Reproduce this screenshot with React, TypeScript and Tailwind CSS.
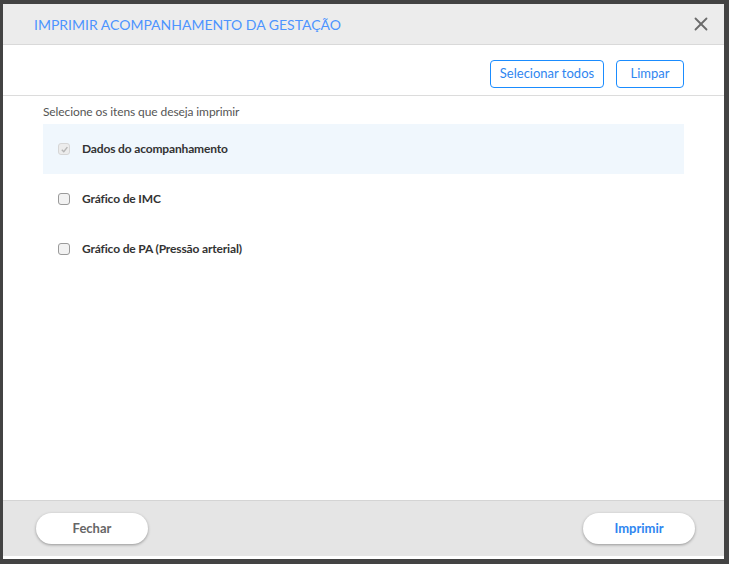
import { X } from 'lucide-react';

const items = [
  { label: 'Dados do acompanhamento', checked: true, disabled: true },
  { label: 'Gráfico de IMC', checked: false, disabled: false },
  { label: 'Gráfico de PA (Pressão arterial)', checked: false, disabled: false },
];

export default function App() {
  return (
    <div className="w-[729px] h-[564px] bg-[#434343] pt-[4px] pl-[3px] font-['Lato','Open_Sans',sans-serif]">
      <div className="w-[721px] h-[555px] bg-white flex flex-col border-b-[3px] border-white">
        {/* header */}
        <div className="h-[41px] bg-[#ececec] border-b border-[#d9d9d9] flex items-center justify-between pl-[31px] pr-[12px]">
          <h1 className="text-[14px] text-[#4d94ff] uppercase">Imprimir acompanhamento da gestação</h1>
          <X size={22} strokeWidth={2} className="text-[#6b6b6b]" />
        </div>

        <div className="h-[51px] border-b border-[#dcdcdc] flex items-start justify-end gap-[12px] pt-[15px] pr-[40px]">
          <button className="h-[28px] w-[114px] rounded-[4px] border border-[#1a8cff] text-[13px] text-[#2f86f0] bg-white">
            Selecionar todos
          </button>
          <button className="h-[28px] w-[68px] rounded-[4px] border border-[#1a8cff] text-[13px] text-[#2f86f0] bg-white">
            Limpar
          </button>
        </div>

        <div className="flex-1 px-[40px] pt-[7px]">
          <p className="text-[12px] text-[#555] mb-[3px] tracking-[-0.1px]">Selecione os itens que deseja imprimir</p>
          <div className="flex flex-col">
            {items.map((item, idx) => (
              <label
                key={idx}
                className={`h-[50px] flex items-center gap-[12px] pl-[15px] ${item.checked ? 'bg-[#f0f7fd]' : ''}`}
              >
                <span
                  className={`w-[12px] h-[12px] rounded-[3px] border flex items-center justify-center ${
                    item.disabled ? 'border-[#d6d6d6] bg-[#ececec]' : 'border-[#9a9a9a] bg-[#f2f2f2]'
                  }`}
                >
                  {item.checked && (
                    <svg width="9" height="9" viewBox="0 0 10 10">
                      <path d="M2 5.2 L4.2 7.4 L8.2 2.4" fill="none" stroke="#b5b5b5" strokeWidth="1.6" />
                    </svg>
                  )}
                </span>
                <span className="text-[12px] font-bold text-[#333] tracking-[-0.15px]">{item.label}</span>
              </label>
            ))}
          </div>
        </div>

        <div className="h-[56px] bg-[#e5e5e5] border-t border-[#d4d4d4] flex items-center justify-between pl-[33px] pr-[29px]">
          <button className="w-[112px] h-[31px] rounded-full bg-white shadow-[0_1px_3px_rgba(0,0,0,0.35)] text-[13px] font-bold text-[#666]">
            Fechar
          </button>
          <button className="w-[112px] h-[31px] rounded-full bg-white shadow-[0_1px_3px_rgba(0,0,0,0.35)] text-[13px] font-bold text-[#2f86f0]">
            Imprimir
          </button>
        </div>
      </div>
    </div>
  );
}
